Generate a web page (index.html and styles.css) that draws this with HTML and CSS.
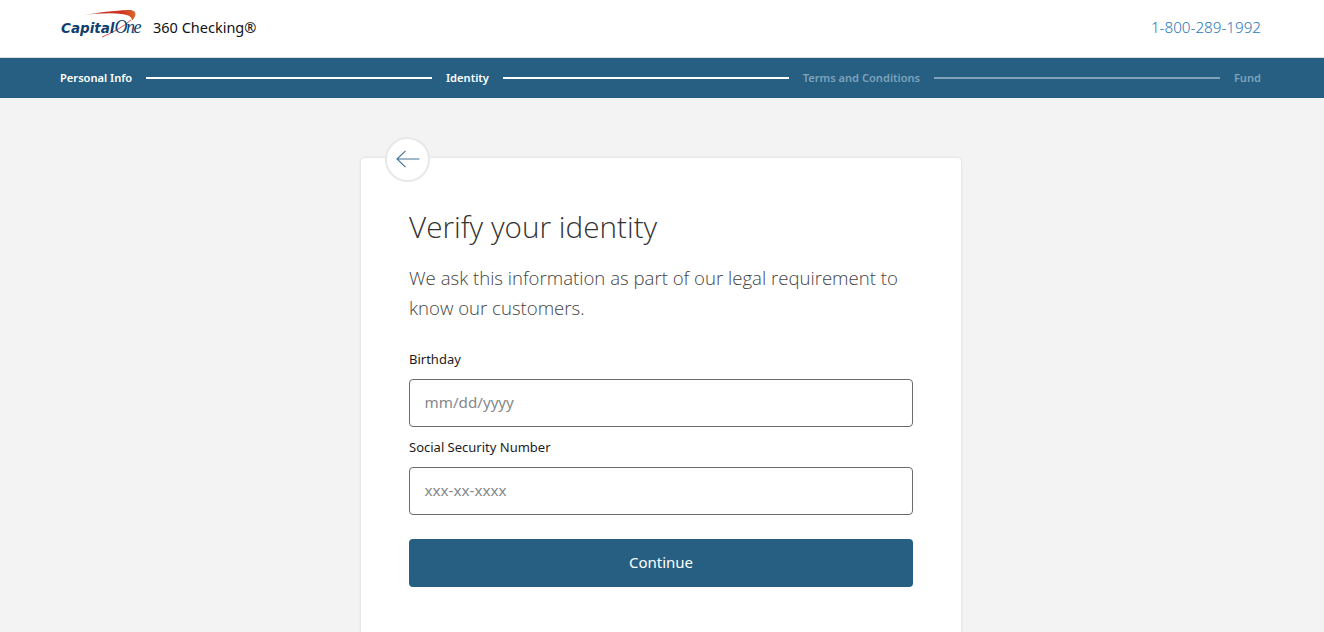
FILE: index.html
```html
<!DOCTYPE html>
<html lang="en">
<head>
<meta charset="utf-8">
<title>Verify your identity</title>
<link rel="stylesheet" href="styles.css">
</head>
<body>
<header class="top">
  <div class="brand">
    <div class="logo">
      <svg class="swoosh" viewBox="0 0 81 32" width="81" height="32" aria-hidden="true">
        <defs><linearGradient id="sw" x1="0" x2="1" y1="0" y2="0"><stop offset="0" stop-color="#b8281c"/><stop offset=".75" stop-color="#cf3420"/><stop offset="1" stop-color="#d9692f"/></linearGradient></defs>
        <path d="M22 7.500C38 4.500 55 2.500 68 2C73 1.800 75.500 3.500 75.500 6C75.500 8 74 10.500 72 12.500C72 9 69 7 62 6C50 4.500 35 5.500 22 7.500Z" fill="url(#sw)"/>
        <path d="M42 29C52 25 63 19 71 12" fill="none" stroke="#c8321f" stroke-width=".8"/>
      </svg>
      <span class="logo-text"><span class="cap">Capital</span><span class="one">One</span></span>
    </div>
    <span class="product">360 Checking®</span>
  </div>
  <a class="phone">1-800-289-1992</a>
</header>
<nav class="steps">
  <span class="step on">Personal Info</span><span class="line on"></span>
  <span class="step on">Identity</span><span class="line on"></span>
  <span class="step">Terms and Conditions</span><span class="line"></span>
  <span class="step">Fund</span>
</nav>
<main class="page">
  <section class="card">
    <button class="back" aria-label="Back">
      <svg viewBox="0 0 24 18" width="24" height="18" aria-hidden="true"><path d="M23.500 9H1M9.500 .8 1 9l8.500 8.200" fill="none" stroke="#3f7396" stroke-width="1.100"/></svg>
    </button>
    <h1 class="title">Verify your identity</h1>
    <p class="lead">We ask this information as part of our legal requirement to know our customers.</p>
    <label class="label">Birthday</label>
    <div class="input">mm/dd/yyyy</div>
    <label class="label">Social Security Number</label>
    <div class="input">xxx-xx-xxxx</div>
    <button class="continue">Continue</button>
  </section>
</main>
</body>
</html>
```
FILE: styles.css
```css
* { box-sizing: border-box; }
html, body { margin: 0; height: 632px; overflow: hidden; }
body { background: #f3f3f3; font-family: "Noto Sans", "Open Sans", sans-serif; color: #1c1c1c; }
.top { height: 58px; background: #fff; border-bottom: 1px solid #dcdcdc; display: flex; align-items: center; justify-content: space-between; padding: 0 63px 3px 60px; }
.brand { display: flex; align-items: center; gap: 13px; }
.logo { position: relative; width: 80px; height: 30px; }
.swoosh { position: absolute; left: 0; top: -4px; }
.logo-text { position: absolute; left: 1px; top: 7px; white-space: nowrap; line-height: 16px; }
.cap { font: italic 700 13.5px/16px "DejaVu Sans", sans-serif; color: #0f3e6e; letter-spacing: 0; }
.one { font: italic 400 18px/16px "Liberation Serif", serif; color: #0f3e6e; letter-spacing: -1.5px; }
.product { font-size: 14.5px; color: #111; }
.phone { font-size: 15.2px; font-weight: 300; color: #2a78b8; }
.steps { height: 40px; background: #265f82; display: flex; align-items: center; gap: 14px; padding: 0 63px 0 60px; font-size: 11.1px; font-weight: 600; color: #7ea3bb; }
.step { white-space: nowrap; margin-bottom: 2px; }
.step.on { color: #fff; }
.line { flex: 1; height: 2px; background: #7ea3bb; }
.line.on { background: #fff; }
.page { height: 534px; overflow: hidden; display: flex; justify-content: center; padding: 60px 2px 0 0; }
.card { position: relative; width: 600px; height: 500px; flex: none; background: #fff; border-radius: 4px; box-shadow: 0 0 3px rgba(0,0,0,.14); padding: 48px 48px 0; }
.back { position: absolute; left: 24px; top: -21px; width: 45px; height: 45px; border-radius: 50%; background: #fff; border: 2px solid #e8e8e8; padding: 0 0 2px; display: flex; align-items: center; justify-content: center; }
.title { margin: 0; font-family: "Open Sans", sans-serif; font-size: 29.7px; line-height: 42px; font-weight: 300; color: #333; }
.lead { margin: 15px 0 0; font-family: "Open Sans", sans-serif; font-size: 18.6px; line-height: 30px; font-weight: 300; color: #444; }
.label { display: block; margin-top: 27px; font-size: 13px; line-height: 18px; color: #1c1c1c; }
.input + .label { margin-top: 11px; }
.input { margin-top: 11px; height: 48px; border: 1px solid #6b6b6b; border-radius: 4px; padding: 0 14.500px 2px; display: flex; align-items: center; font-size: 15.2px; color: #84888c; }
.continue { display: block; width: 100%; height: 48px; margin-top: 24px; padding: 0 0 2px; background: #265f82; color: #fff; border: 0; border-radius: 4px; font: 400 15px "Noto Sans", sans-serif; }
```
